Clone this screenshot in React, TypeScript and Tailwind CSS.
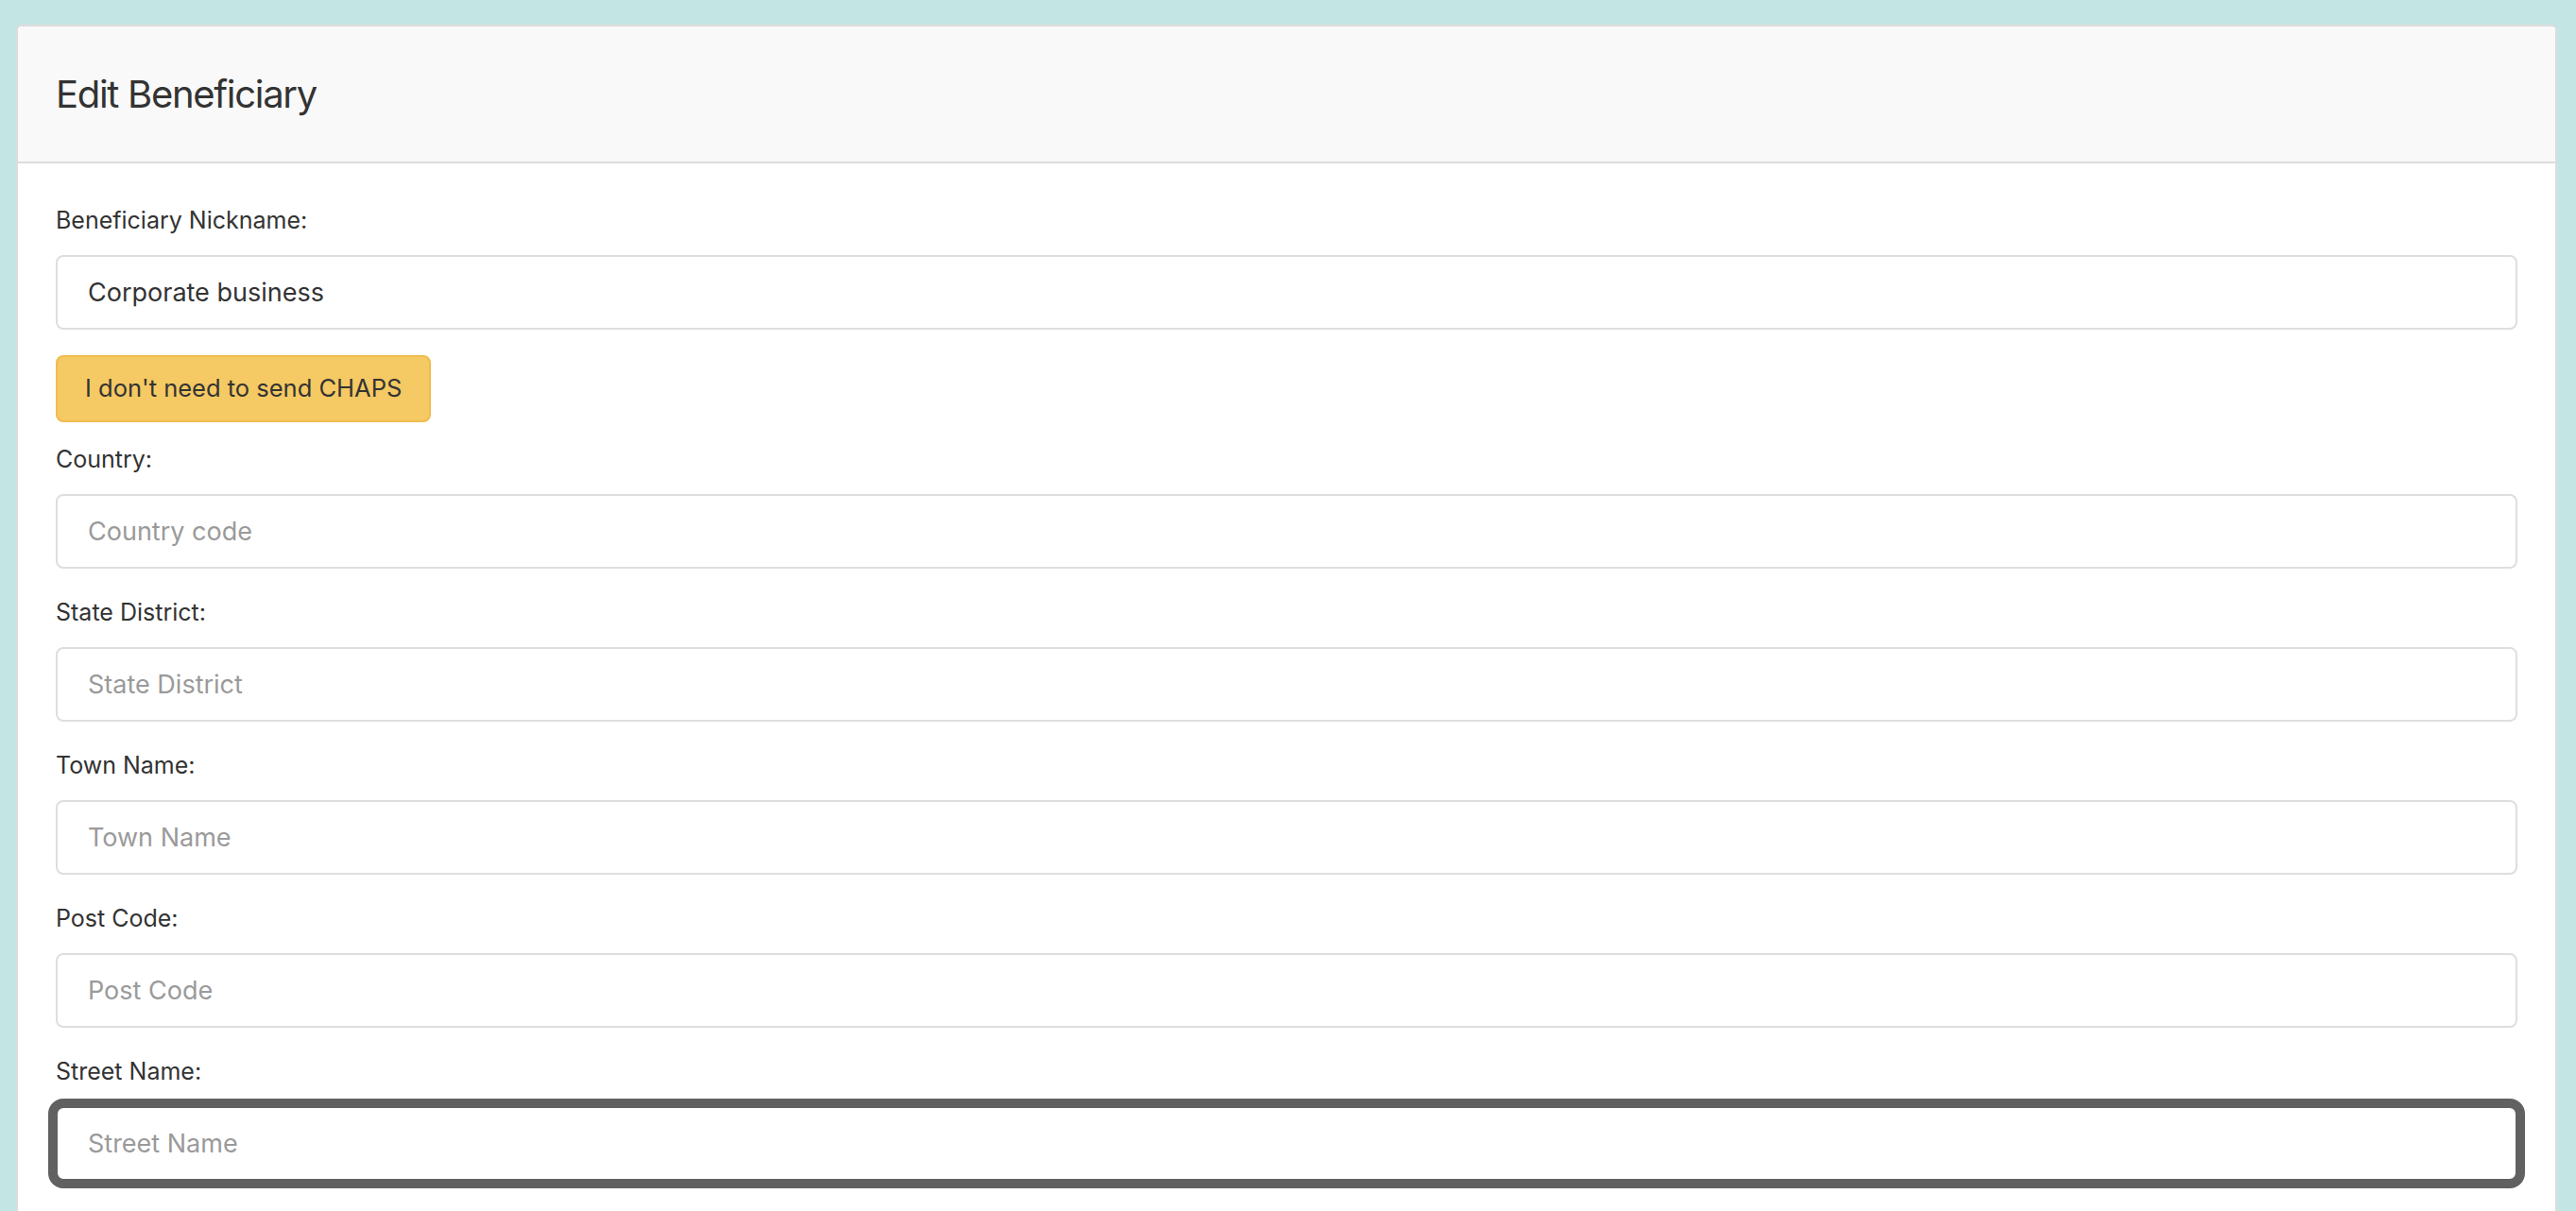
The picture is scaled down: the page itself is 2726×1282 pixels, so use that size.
import React from "react";

const font = { fontFamily: "Inter, 'Noto Sans', sans-serif" };

function Field({ label, placeholder, focused }: { label: string; placeholder: string; focused?: boolean }) {
  return (
    <div className="mb-[29px]">
      <label className="block h-[35px] leading-[35px] text-[25px] text-[#333] mb-[19px]">{label}</label>
      <input
        placeholder={placeholder}
        className={
          "block w-full h-[79px] rounded-[8px] border-2 border-[#dedede] bg-white px-[32px] text-[27px] text-[#333] placeholder:text-[#9a9a9a] " +
          (focused ? "outline-[10px] outline-solid outline-[#616161] outline-offset-[-2px]" : "outline-none")
        }
      />
    </div>
  );
}

export default function App() {
  return (
    <div className="min-h-screen w-full bg-[#c3e6e5] pt-[26px] pl-[17px] pr-[20px] overflow-hidden h-[1282px]" style={font}>
      <div className="bg-white border-2 border-[#dcdcdc] rounded-t-[6px]">
        <div className="h-[145px] bg-[#f9f9f9] border-b-2 border-[#dcdcdc] flex items-center px-[40px] rounded-t-[6px]">
          <h1 className="text-[40px] text-[#333] font-normal tracking-[-1.3px]">Edit Beneficiary</h1>
        </div>
        <div className="px-[40px] pt-[43px] pb-[60px]">
          <div>
            <label className="block h-[35px] leading-[35px] text-[25px] text-[#333] mb-[19px]">Beneficiary Nickname:</label>
            <input
              defaultValue="Corporate business"
              className="block w-full h-[79px] rounded-[8px] border-2 border-[#dedede] bg-white px-[32px] text-[27px] text-[#333] outline-none"
            />
          </div>
          <button className="mt-[27px] mb-[22px] h-[71px] px-[29px] rounded-[8px] border-2 border-[#efbd4f] bg-[#f5c963] text-[25.5px] text-[#333]">
            I don't need to send CHAPS
          </button>
          <Field label="Country:" placeholder="Country code" />
          <Field label="State District:" placeholder="State District" />
          <Field label="Town Name:" placeholder="Town Name" />
          <Field label="Post Code:" placeholder="Post Code" />
          <Field label="Street Name:" placeholder="Street Name" focused />
        </div>
      </div>
    </div>
  );
}
